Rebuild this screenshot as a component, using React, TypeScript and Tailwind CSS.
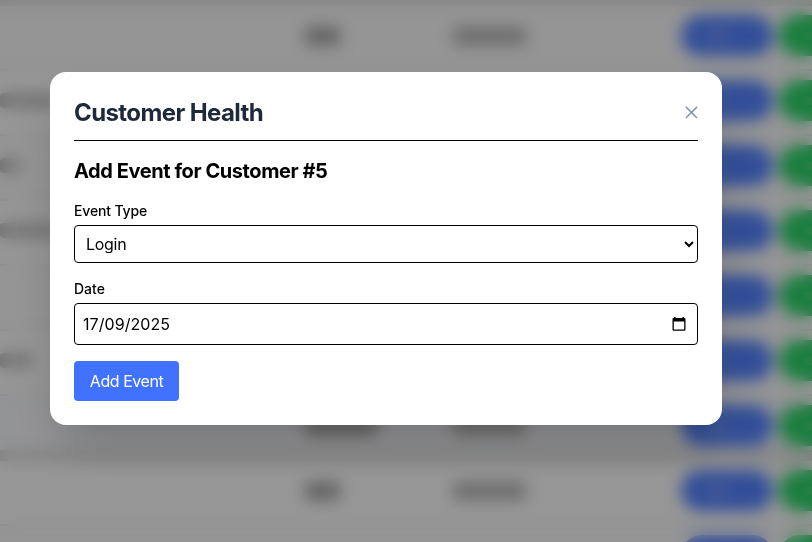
import React from 'react';

type Row = { name: string; first: string; tone: string };

const plain = 'border-b-2 border-[#e2e3e3] bg-[#f8f8fa]';
const light = 'border-b-2 border-[#e2e3e3] bg-[#fbfbfb]';
const divided = 'border-b-[11px] border-[#d8d8d8] bg-[#f6f7fa]';

const rows: Row[] = [
  { name: 'w-0', first: 'w-[35px]', tone: plain },
  { name: 'w-[58px]', first: 'w-[35px]', tone: light },
  { name: 'w-[20px]', first: 'w-[35px]', tone: plain },
  { name: 'w-[58px]', first: 'w-[35px]', tone: light },
  { name: 'w-0', first: 'w-[35px]', tone: plain },
  { name: 'w-[32px]', first: 'w-[35px]', tone: light },
  { name: 'w-0', first: 'w-[72px]', tone: divided },
  { name: 'w-0', first: 'w-[35px]', tone: light },
  { name: 'w-0', first: 'w-[72px]', tone: plain },
];

function CustomerRow({ row }: { row: Row }) {
  return (
    <div className={`h-[65px] shrink-0 ${row.tone}`}>
      <div className="flex h-[59px] items-center">
        <div className="w-[305px] shrink-0">
          <div className={`h-[15px] rounded-sm bg-[#c0c0c0] ${row.name}`} />
        </div>
        <div className="w-[148px] shrink-0">
          <div className={`h-[18px] rounded bg-[#a2a2a2] ${row.first}`} />
        </div>
        <div className="w-[228px] shrink-0">
          <div className="h-[18px] w-[73px] rounded bg-[#b4b4b4]" />
        </div>
        <div className="flex shrink-0 gap-[6px]">
          <div className="flex h-[41px] w-[92px] items-center rounded-full bg-[#5583ff] pl-7">
            <div className="h-2 w-4 bg-[#8fa8f5]" />
          </div>
          <div className="flex h-[41px] w-[92px] items-center rounded-full bg-[#2bd268] pl-6">
            <div className="h-2 w-9 bg-[#4fd47e]" />
          </div>
        </div>
      </div>
    </div>
  );
}

export default function App() {
  return (
    <div className="relative h-[542px] w-[812px] overflow-hidden bg-[#dedede] font-['Inter','Liberation_Sans',sans-serif] text-black">
      <div className="flex h-full w-[900px] flex-col overflow-hidden pt-[6px]">
        {rows.map((row, i) => (
          <CustomerRow key={i} row={row} />
        ))}
      </div>

      <div className="absolute inset-0 bg-black/40 pl-[50px] pt-[72px] backdrop-blur-[8px]">
        <div className="h-[353px] w-[672px] rounded-2xl bg-white p-6 shadow-2xl">
          <header className="flex h-[45px] items-start justify-between border-b border-black">
            <h2 className="mt-px text-2xl leading-8 font-bold tracking-[-0.6px] text-[#1e2939]">Customer Health</h2>
            <button aria-label="Close" className="mt-[10px]">
              <svg width="13" height="13" viewBox="0 0 13 13" fill="none" stroke="#8e97a8" strokeWidth="1.6">
                <path d="M0.9 0.9 12 12M12 0.9 0.9 12" />
              </svg>
            </button>
          </header>

          <h3 className="mt-4 text-xl leading-7 font-bold tracking-[-0.42px]">Add Event for Customer #5</h3>

          <form className="mt-4">
            <label className="block text-sm leading-5 font-medium tracking-[-0.15px]">Event Type</label>
            <select className="mt-1 block h-[38px] w-full rounded border border-black bg-white px-[7px] pt-[7px] pb-[9px] text-base tracking-[-0.3px]">
              <option>Login</option>
            </select>

            <label className="mt-4 block text-sm leading-5 font-medium">Date</label>
            <div className="mt-1 flex h-[42px] items-center justify-between rounded border border-black pr-[11px] pl-[8px]">
              <span className="text-base tracking-[0.06px]">17/09/2025</span>
              <svg width="14" height="16" viewBox="0 0 14 16">
                <path d="M2 1h1.6v1h6.8V1H12v1h.2c.8 0 1.3.5 1.3 1.3v10.2c0 .8-.5 1.3-1.3 1.3H1.8c-.8 0-1.3-.5-1.3-1.3V3.3C.5 2.5 1 2 1.8 2H2zM1.8 5.4v8.1h10.4V5.4z" fill="black" />
              </svg>
            </div>

            <button type="button" className="mt-4 block h-10 w-[105px] rounded bg-[#4072ff] text-base tracking-[-0.45px] text-white">
              Add Event
            </button>
          </form>
        </div>
      </div>
    </div>
  );
}
